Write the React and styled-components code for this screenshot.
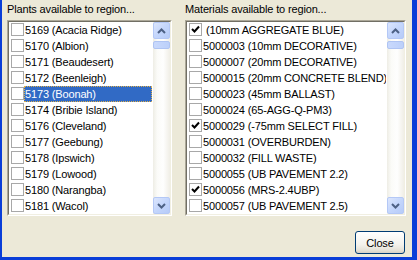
import React from "react";
import styled, { createGlobalStyle } from "styled-components";

const Global = createGlobalStyle`
  html, body { margin: 0; padding: 0; background: #ECE9D8; }
  body { font-family: "Liberation Sans", Arial, sans-serif; font-size: 11px; letter-spacing: -0.15px; }
`;

const Frame = styled.div`
  width: 417px;
  height: 260px;
  box-sizing: border-box;
  border-left: 2px solid #0A3ED8;
  border-right: 5px solid #0A3ED8;
  border-bottom: 3px solid #0A3ED8;
  background: #ECE9D8;
  padding: 3px 6px 0 5px;
  display: flex;
  flex-direction: column;
`;

const Panels = styled.div`
  display: grid;
  grid-template-columns: 165px 221px;
  column-gap: 13px;
`;

const Panel = styled.div`
  display: flex;
  flex-direction: column;
`;

const Caption = styled.div`
  line-height: 13px;
  height: 13px;
  margin: 0 0 4px 0;
  color: #000;
  white-space: nowrap;
`;

const ListBox = styled.div`
  height: 196px;
  box-sizing: border-box;
  border-style: solid;
  border-width: 1px;
  border-color: #ACA899 #FFFFFF #FFFFFF #ACA899;
  display: flex;
`;

const ListInner = styled.div`
  flex: 1;
  display: flex;
  border-style: solid;
  border-width: 1px;
  border-color: #716F64 #F1EFE2 #F1EFE2 #716F64;
  background: #fff;
  min-width: 0;
`;

const Rows = styled.div`
  flex: 1;
  min-width: 0;
  overflow: hidden;
  display: flex;
  flex-direction: column;
`;

const Row = styled.div`
  height: 16px;
  flex: none;
  display: flex;
  align-items: flex-start;
  padding-left: 2px;
`;

const Box = styled.span`
  width: 13px;
  height: 13px;
  box-sizing: border-box;
  margin-top: 1px;
  border: 1px solid #A8A8A8;
  background: #fff;
  flex: none;
  display: flex;
  align-items: center;
  justify-content: center;
`;

const Label = styled.span`
  flex: 1;
  height: 16px;
  box-sizing: border-box;
  line-height: 14px;
  padding: 1px 0 0 1px;
  margin-right: 1px;
  white-space: pre;
  overflow: hidden;
  color: ${(p) => (p.$selected ? "#fff" : "#000")};
  background: ${(p) => (p.$selected ? "#316AC5" : "transparent")};
  outline: ${(p) => (p.$selected ? "1px dotted #E0B04A" : "none")};
  outline-offset: -1px;
`;

const ScrollBar = styled.div`
  width: 17px;
  flex: none;
  display: flex;
  flex-direction: column;
  background: linear-gradient(to right, #EEEDE5 0%, #FBFBF8 25%, #FEFEFE 60%, #F0EEE6 100%);
`;

const ArrowButton = styled.div`
  width: 17px;
  height: 17px;
  box-sizing: border-box;
  border: 1px solid #B4C8F6;
  border-radius: 2px;
  background: linear-gradient(135deg, #DCE6FD 0%, #C4D6FC 50%, #B6CBF8 100%);
  display: flex;
  align-items: center;
  justify-content: center;
  flex: none;
`;

const Thumb = styled.div`
  height: 8px;
  margin-top: 2px;
  box-sizing: border-box;
  border: 1px solid #AFC4F3;
  border-radius: 2px;
  background: linear-gradient(to right, #C9D9FC, #BCD0FA);
  flex: none;
`;

const Track = styled.div`
  flex: 1;
`;

const Footer = styled.div`
  display: flex;
  justify-content: flex-end;
  margin-top: 15px;
  padding-right: 1px;
`;

const Button = styled.button`
  width: 50px;
  height: 23px;
  box-sizing: border-box;
  border: 1px solid #003C74;
  border-radius: 3px;
  background: linear-gradient(#FFFFFF 0%, #F3F2EC 60%, #E6E3D9 85%, #D6D0C5 100%);
  font-family: "Liberation Sans", Arial, sans-serif;
  font-size: 11px;
  letter-spacing: -0.15px;
  color: #000;
  padding: 0;
`;

const Chevron = ({ down }) => (
  <svg width="9" height="6" viewBox="0 0 9 6">
    <polyline
      points={down ? "1,1 4.5,4.5 8,1" : "1,5 4.5,1.5 8,5"}
      fill="none"
      stroke="#4D6185"
      strokeWidth="2"
    />
  </svg>
);

const Check = () => (
  <svg width="9" height="9" viewBox="0 0 9 9">
    <polyline points="1,4 3.5,6.5 8,1.5" fill="none" stroke="#000" strokeWidth="2" />
  </svg>
);

const plants = [
  "5169 (Acacia Ridge)",
  "5170 (Albion)",
  "5171 (Beaudesert)",
  "5172 (Beenleigh)",
  "5173 (Boonah)",
  "5174 (Bribie Island)",
  "5176 (Cleveland)",
  "5177 (Geebung)",
  "5178 (Ipswich)",
  "5179 (Lowood)",
  "5180 (Narangba)",
  "5181 (Wacol)",
].map((t) => ({ text: t, checked: false, selected: t === "5173 (Boonah)" }));

const materials = [
  [" (10mm AGGREGATE BLUE)", true],
  ["5000003 (10mm DECORATIVE)", false],
  ["5000007 (20mm DECORATIVE)", false],
  ["5000015 (20mm CONCRETE BLEND)", false],
  ["5000023 (45mm BALLAST)", false],
  ["5000024 (65-AGG-Q-PM3)", false],
  ["5000029 (-75mm SELECT FILL)", true],
  ["5000031 (OVERBURDEN)", false],
  ["5000032 (FILL WASTE)", false],
  ["5000055 (UB PAVEMENT 2.2)", false],
  ["5000056 (MRS-2.4UBP)", true],
  ["5000057 (UB PAVEMENT 2.5)", false],
].map(([text, checked]) => ({ text, checked, selected: false }));

const CheckList = ({ items }) => (
  <ListBox>
    <ListInner>
      <Rows>
        {items.map((it) => (
          <Row key={it.text}>
            <Box>{it.checked && <Check />}</Box>
            <Label $selected={it.selected}>{it.text}</Label>
          </Row>
        ))}
      </Rows>
      <ScrollBar>
        <ArrowButton>
          <Chevron />
        </ArrowButton>
        <Thumb />
        <Track />
        <ArrowButton>
          <Chevron down />
        </ArrowButton>
      </ScrollBar>
    </ListInner>
  </ListBox>
);

export default function App() {
  return (
    <>
      <Global />
      <Frame>
        <Panels>
          <Panel>
            <Caption>Plants available to region...</Caption>
            <CheckList items={plants} />
          </Panel>
          <Panel>
            <Caption>Materials available to region...</Caption>
            <CheckList items={materials} />
          </Panel>
        </Panels>
        <Footer>
          <Button>Close</Button>
        </Footer>
      </Frame>
    </>
  );
}
